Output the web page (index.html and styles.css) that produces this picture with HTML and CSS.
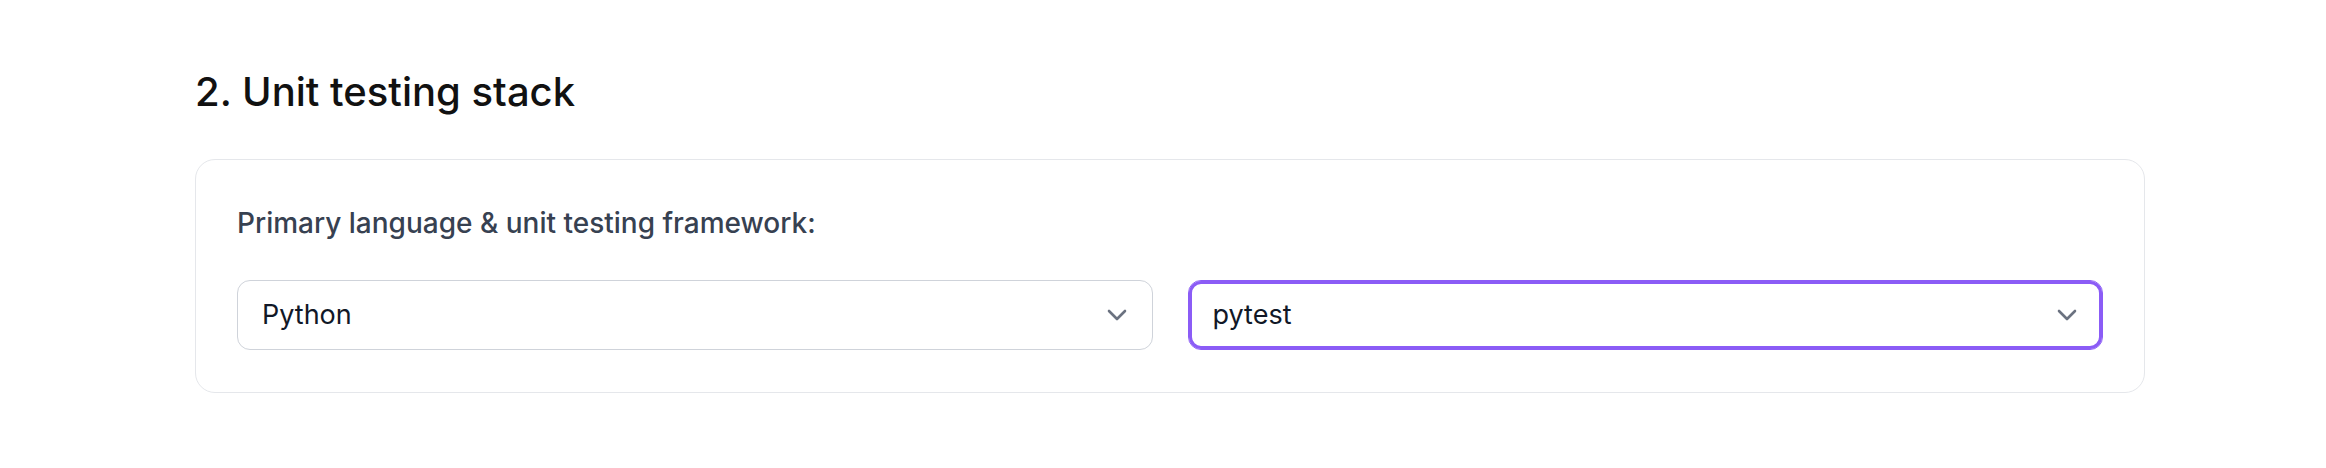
FILE: index.html
```html
<!DOCTYPE html>
<html lang="en">
<head>
<meta charset="utf-8">
<title>Unit testing stack</title>
<link rel="stylesheet" href="styles.css">
</head>
<body>
<main class="page">
  <section class="section">
    <h2 class="section-title">2. Unit testing stack</h2>
    <div class="card">
      <label class="field-label">Primary language &amp; unit testing framework:</label>
      <div class="select-grid">
        <div class="select">
          <span class="select-value">Python</span>
          <svg class="chevron" viewBox="0 0 20 12" aria-hidden="true"><path d="M2 2l8 8 8-8" fill="none" stroke="currentColor" stroke-width="2.6" stroke-linecap="round" stroke-linejoin="round"/></svg>
        </div>
        <div class="select select-focused">
          <span class="select-value">pytest</span>
          <svg class="chevron" viewBox="0 0 20 12" aria-hidden="true"><path d="M2 2l8 8 8-8" fill="none" stroke="currentColor" stroke-width="2.6" stroke-linecap="round" stroke-linejoin="round"/></svg>
        </div>
      </div>
    </div>
  </section>
</main>
</body>
</html>
```

FILE: styles.css
```css
* { box-sizing: border-box; }

html, body {
  margin: 0;
  padding: 0;
  background: #ffffff;
}

body {
  font-family: Inter, "Noto Sans", "Liberation Sans", sans-serif;
  color: #111827;
}

.page {
  padding: 68px 181px 0 195px;
}

.section-title {
  margin: 0 0 43px;
  font-size: 40px;
  line-height: 48px;
  font-weight: 500;
  color: #111111;
}

.card {
  border: 1px solid #e5e7eb;
  border-radius: 20px;
  padding: 45px 41px 42px;
  background: #ffffff;
}

.field-label {
  display: block;
  font-size: 28px;
  line-height: 37px;
  font-weight: 500;
  color: #374151;
  margin-bottom: 38px;
}

.select-grid {
  display: grid;
  grid-template-columns: 1fr 1fr;
  gap: 35px;
}

.select {
  height: 70px;
  display: flex;
  align-items: center;
  justify-content: space-between;
  padding: 0 25px 0 24px;
  border: 1px solid #cfd3da;
  border-radius: 13px;
  background: #ffffff;
}

.select-focused {
  border-color: #8b5cf6;
  box-shadow: inset 0 0 0 3px #8b5cf6;
}

.select-value {
  font-size: 27px;
  line-height: 40px;
  font-weight: 400;
  color: #111827;
}

.chevron {
  width: 20px;
  height: 12px;
  color: #6b7280;
  flex: none;
}
```
